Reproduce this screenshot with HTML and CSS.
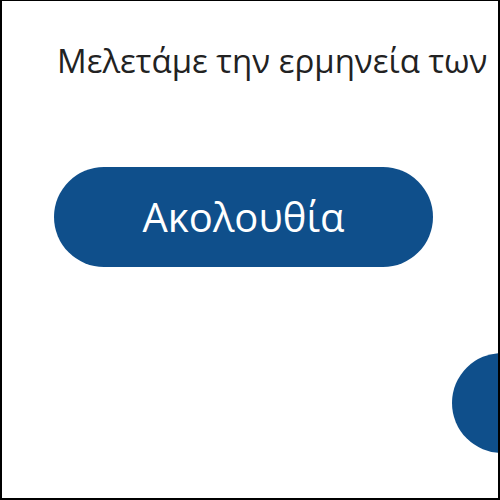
FILE: index.html
```html
<!DOCTYPE html>
<html lang="el">
<head>
<meta charset="utf-8">
<link rel="stylesheet" href="styles.css">
</head>
<body>
<div class="frame">
  <p class="lead">Μελετάμε την ερμηνεία των ρημάτων</p>
  <div class="actions">
    <button class="pill">Ακολουθία</button>
  </div>
  <div class="fab-row">
    <span class="fab"></span>
  </div>
</div>
</body>
</html>
```

FILE: styles.css
```css
html, body {
  margin: 0;
  padding: 0;
  background: #fff;
}
.frame {
  box-sizing: border-box;
  width: 500px;
  height: 500px;
  border: 2px solid #000;
  border-top-width: 1px;
  overflow: hidden;
  background: #fff;
  font-family: "Open Sans", "Noto Sans", sans-serif;
}
.lead {
  margin: 0;
  padding: 37px 0 0 55px;
  font-size: 33px;
  line-height: 45px;
  color: #222;
  white-space: nowrap;
}
.actions {
  padding: 84px 0 0 52px;
}
.pill {
  display: flex;
  align-items: center;
  justify-content: center;
  width: 379px;
  height: 100px;
  border: none;
  border-radius: 50px;
  background: #0f4f8b;
  color: #fff;
  font-family: "Open Sans", "Noto Sans", sans-serif;
  font-size: 40px;
  padding: 0 0 2px;
}
.fab-row {
  display: flex;
  justify-content: flex-end;
  padding-top: 86px;
  margin-right: -54px;
}
.fab {
  display: block;
  width: 100px;
  height: 100px;
  border-radius: 50%;
  background: #0f4f8b;
}
```
